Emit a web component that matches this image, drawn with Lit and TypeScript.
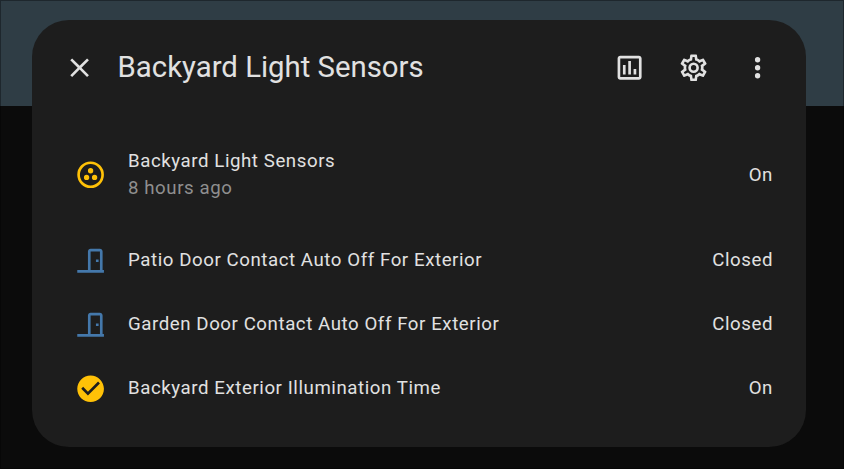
import { LitElement, html, css, svg } from "lit";
import { customElement, property } from "lit/decorators.js";

const icons = {
  close: "M19,6.41L17.59,5L12,10.59L6.41,5L5,6.41L10.59,12L5,17.59L6.41,19L12,13.41L17.59,19L19,17.59L13.41,12L19,6.41Z",
  chart: "M9 17H7V10H9V17M13 17H11V7H13V17M17 17H15V13H17V17M19 19H5V5H19V19.1M19 3H5C3.9 3 3 3.9 3 5V19C3 20.1 3.9 21 5 21H19C20.1 21 21 20.1 21 19V5C21 3.9 20.1 3 19 3Z",
  cog: "M12,8A4,4 0 0,1 16,12A4,4 0 0,1 12,16A4,4 0 0,1 8,12A4,4 0 0,1 12,8M12,10A2,2 0 0,0 10,12A2,2 0 0,0 12,14A2,2 0 0,0 14,12A2,2 0 0,0 12,10M10,22C9.75,22 9.54,21.82 9.5,21.58L9.13,18.93C8.5,18.68 7.96,18.34 7.44,17.94L4.95,18.95C4.73,19.03 4.46,18.95 4.34,18.73L2.34,15.27C2.21,15.05 2.27,14.78 2.46,14.63L4.57,12.97L4.5,12L4.57,11L2.46,9.37C2.27,9.22 2.21,8.95 2.34,8.73L4.34,5.27C4.46,5.05 4.73,4.96 4.95,5.05L7.44,6.05C7.96,5.66 8.5,5.32 9.13,5.07L9.5,2.42C9.54,2.18 9.75,2 10,2H14C14.25,2 14.46,2.18 14.5,2.42L14.87,5.07C15.5,5.32 16.04,5.66 16.56,6.05L19.05,5.05C19.27,4.96 19.54,5.05 19.66,5.27L21.66,8.73C21.79,8.95 21.73,9.22 21.54,9.37L19.43,11L19.5,12L19.43,13L21.54,14.63C21.73,14.78 21.79,15.05 21.66,15.27L19.66,18.73C19.54,18.95 19.27,19.04 19.05,18.95L16.56,17.95C16.04,18.34 15.5,18.68 14.87,18.93L14.5,21.58C14.46,21.82 14.25,22 14,22H10M11.25,4L10.88,6.61C9.68,6.86 8.62,7.5 7.85,8.39L5.44,7.35L4.69,8.65L6.8,10.2C6.4,11.37 6.4,12.64 6.8,13.8L4.68,15.36L5.43,16.66L7.86,15.62C8.63,16.5 9.68,17.14 10.87,17.38L11.24,20H12.76L13.13,17.39C14.32,17.14 15.37,16.5 16.14,15.62L18.57,16.66L19.32,15.36L17.2,13.81C17.6,12.64 17.6,11.37 17.2,10.2L19.31,8.65L18.56,7.35L16.15,8.39C15.38,7.5 14.32,6.86 13.12,6.62L12.75,4H11.25Z",
  dots: "M12,16A2,2 0 0,1 14,18A2,2 0 0,1 12,20A2,2 0 0,1 10,18A2,2 0 0,1 12,16M12,10A2,2 0 0,1 14,12A2,2 0 0,1 12,14A2,2 0 0,1 10,12A2,2 0 0,1 12,10M12,4A2,2 0 0,1 14,6A2,2 0 0,1 12,8A2,2 0 0,1 10,6A2,2 0 0,1 12,4Z",
  group: "M15,12A2,2 0 0,0 13,14A2,2 0 0,0 15,16A2,2 0 0,0 17,14A2,2 0 0,0 15,12M12,20A8,8 0 0,1 4,12A8,8 0 0,1 12,4A8,8 0 0,1 20,12A8,8 0 0,1 12,20M12,2A10,10 0 0,0 2,12A10,10 0 0,0 12,22A10,10 0 0,0 22,12A10,10 0 0,0 12,2M14,9A2,2 0 0,0 12,7A2,2 0 0,0 10,9A2,2 0 0,0 12,11A2,2 0 0,0 14,9M9,12A2,2 0 0,0 7,14A2,2 0 0,0 9,16A2,2 0 0,0 11,14A2,2 0 0,0 9,12Z",
  door: "M16,11H18V13H16V11M12,3H19C20.11,3 21,3.89 21,5V19H22V21H2V19H10V5C10,3.89 10.89,3 12,3M12,5V19H19V5H12Z",
  check: "M12 2C6.5 2 2 6.5 2 12S6.5 22 12 22 22 17.5 22 12 17.5 2 12 2M10 17L5 12L6.41 10.59L10 14.17L17.59 6.58L19 8L10 17Z",
};

type IconName = keyof typeof icons;

interface Entity {
  icon: IconName;
  color: string;
  name: string;
  state: string;
}

@customElement("mdi-icon")
class MdiIcon extends LitElement {
  static styles = css`
    :host {
      display: block;
      width: 32px;
      height: 32px;
    }
    svg {
      display: block;
      width: 100%;
      height: 100%;
      fill: currentColor;
    }
  `;

  @property() name: IconName = "close";

  render() {
    return html`<svg viewBox="0.3 0.2 24 24">${svg`<path d=${icons[this.name]}></path>`}</svg>`;
  }
}

@customElement("entity-row")
class EntityRow extends LitElement {
  static styles = css`
    :host {
      display: flex;
      align-items: center;
      height: 64px;
      font-size: 18.67px;
      line-height: 27px;
      letter-spacing: 0.57px;
      white-space: nowrap;
    }
    .icon {
      margin-right: 21.5px;
      padding-top: 1px;
    }
    :host([secondary]) .icon {
      padding: 0 0 1px;
    }
    .on {
      color: #ffc107;
    }
    .closed {
      color: #4478ab;
    }
    .info {
      flex: 1;
    }
    .secondary {
      color: #8f8f8f;
    }
  `;

  @property({ attribute: false }) entity!: Entity;
  @property() secondary = "";

  render() {
    const { icon, color, name, state } = this.entity;
    return html`
      <mdi-icon class="icon ${color}" .name=${icon}></mdi-icon>
      <div class="info">
        <div>${name}</div>
        ${this.secondary ? html`<div class="secondary">${this.secondary}</div>` : ""}
      </div>
      <div>${state}</div>
    `;
  }
}

@customElement("app-root")
class AppRoot extends LitElement {
  static styles = css`
    :host {
      display: block;
      box-sizing: border-box;
      width: 844px;
      height: 469px;
      padding: 20px 38px 22px 32px;
      background: linear-gradient(#2f3d45 106px, #0b0b0b 106px);
      box-shadow: inset 0 0 0 1px rgba(0, 0, 0, 0.35);
      font-family: Roboto, sans-serif;
      color: #e1e1e1;
    }
    .dialog {
      box-sizing: border-box;
      height: 427px;
      border-radius: 37px;
      background: #1d1d1d;
    }
    .header {
      display: flex;
      align-items: center;
      height: 96px;
      padding: 0 32px;
    }
    .title {
      flex: 1;
      margin: -2px 0 0 21.6px;
      font-size: 29.33px;
      line-height: 36px;
      font-weight: 400;
      white-space: nowrap;
    }
    .actions {
      display: flex;
      gap: 32px;
    }
    .content {
      padding: 27px 33px 0 42.5px;
    }
    .main {
      margin-bottom: 21px;
    }
  `;

  group: Entity = { icon: "group", color: "on", name: "Backyard Light Sensors", state: "On" };

  members: Entity[] = [
    { icon: "door", color: "closed", name: "Patio Door Contact Auto Off For Exterior", state: "Closed" },
    { icon: "door", color: "closed", name: "Garden Door Contact Auto Off For Exterior", state: "Closed" },
    { icon: "check", color: "on", name: "Backyard Exterior Illumination Time", state: "On" },
  ];

  render() {
    return html`
      <div class="dialog">
        <div class="header">
          <mdi-icon name="close"></mdi-icon>
          <h1 class="title">${this.group.name}</h1>
          <div class="actions">
            <mdi-icon name="chart"></mdi-icon>
            <mdi-icon name="cog"></mdi-icon>
            <mdi-icon name="dots"></mdi-icon>
          </div>
        </div>
        <div class="content">
          <entity-row class="main" .entity=${this.group} secondary="8 hours ago"></entity-row>
          ${this.members.map((entity) => html`<entity-row .entity=${entity}></entity-row>`)}
        </div>
      </div>
    `;
  }
}
